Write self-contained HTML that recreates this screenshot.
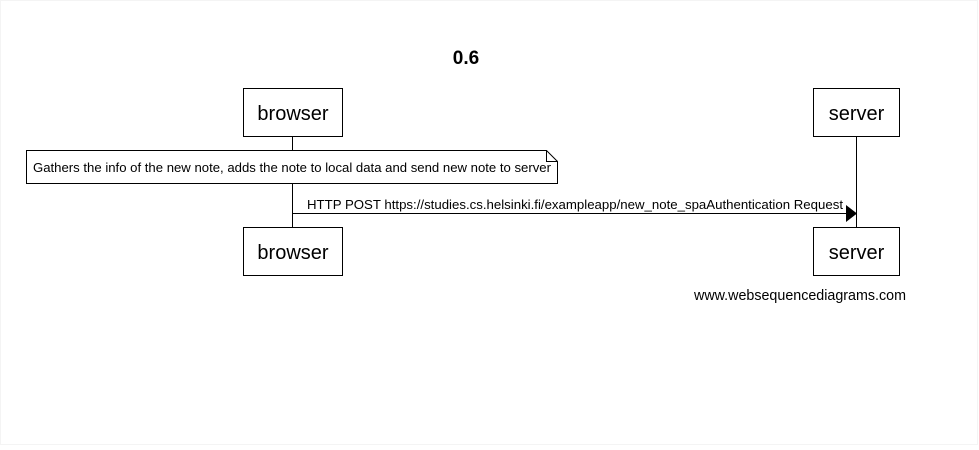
<!DOCTYPE html>
<html><head><style>body{margin:0;background:#fff}</style></head><body>
<svg width="979" height="445" xmlns="http://www.w3.org/2000/svg" font-family="Liberation Sans, Arial, sans-serif">
<rect x="0.5" y="0.5" width="977" height="444" fill="#fff" stroke="#f4f4f4"/>
<text x="466" y="64" text-anchor="middle" font-size="19" font-weight="bold">0.6</text>
<line x1="292.5" y1="137" x2="292.5" y2="227" stroke="#000"/>
<line x1="856.5" y1="137" x2="856.5" y2="227" stroke="#000"/>
<rect x="243.5" y="88.5" width="99" height="48" fill="#fff" stroke="#000"/>
<text x="293" y="120" text-anchor="middle" font-size="20">browser</text>
<rect x="813.5" y="88.5" width="86" height="48" fill="#fff" stroke="#000"/>
<text x="856.5" y="120" text-anchor="middle" font-size="20">server</text>
<path d="M26.5 150.5 H546.5 L557.5 161.5 V183.5 H26.5 Z" fill="#fff" stroke="#000"/>
<path d="M546.5 150.5 V161.5 H557.5" fill="none" stroke="#000"/>
<text x="33" y="172" font-size="13.1" textLength="518" lengthAdjust="spacingAndGlyphs">Gathers the info of the new note, adds the note to local data and send new note to server</text>
<line x1="292" y1="213.5" x2="847" y2="213.5" stroke="#000"/>
<path d="M846 205 L857 213.5 L846 222 Z" fill="#000"/>
<text x="307" y="209" font-size="13.2" textLength="536" lengthAdjust="spacingAndGlyphs">HTTP POST https://studies.cs.helsinki.fi/exampleapp/new_note_spaAuthentication Request</text>
<rect x="243.5" y="227.5" width="99" height="48" fill="#fff" stroke="#000"/>
<text x="293" y="259" text-anchor="middle" font-size="20">browser</text>
<rect x="813.5" y="227.5" width="86" height="48" fill="#fff" stroke="#000"/>
<text x="856.5" y="259" text-anchor="middle" font-size="20">server</text>
<text x="694" y="300" font-size="14.3" textLength="212" lengthAdjust="spacingAndGlyphs">www.websequencediagrams.com</text>
</svg>
</body></html>
